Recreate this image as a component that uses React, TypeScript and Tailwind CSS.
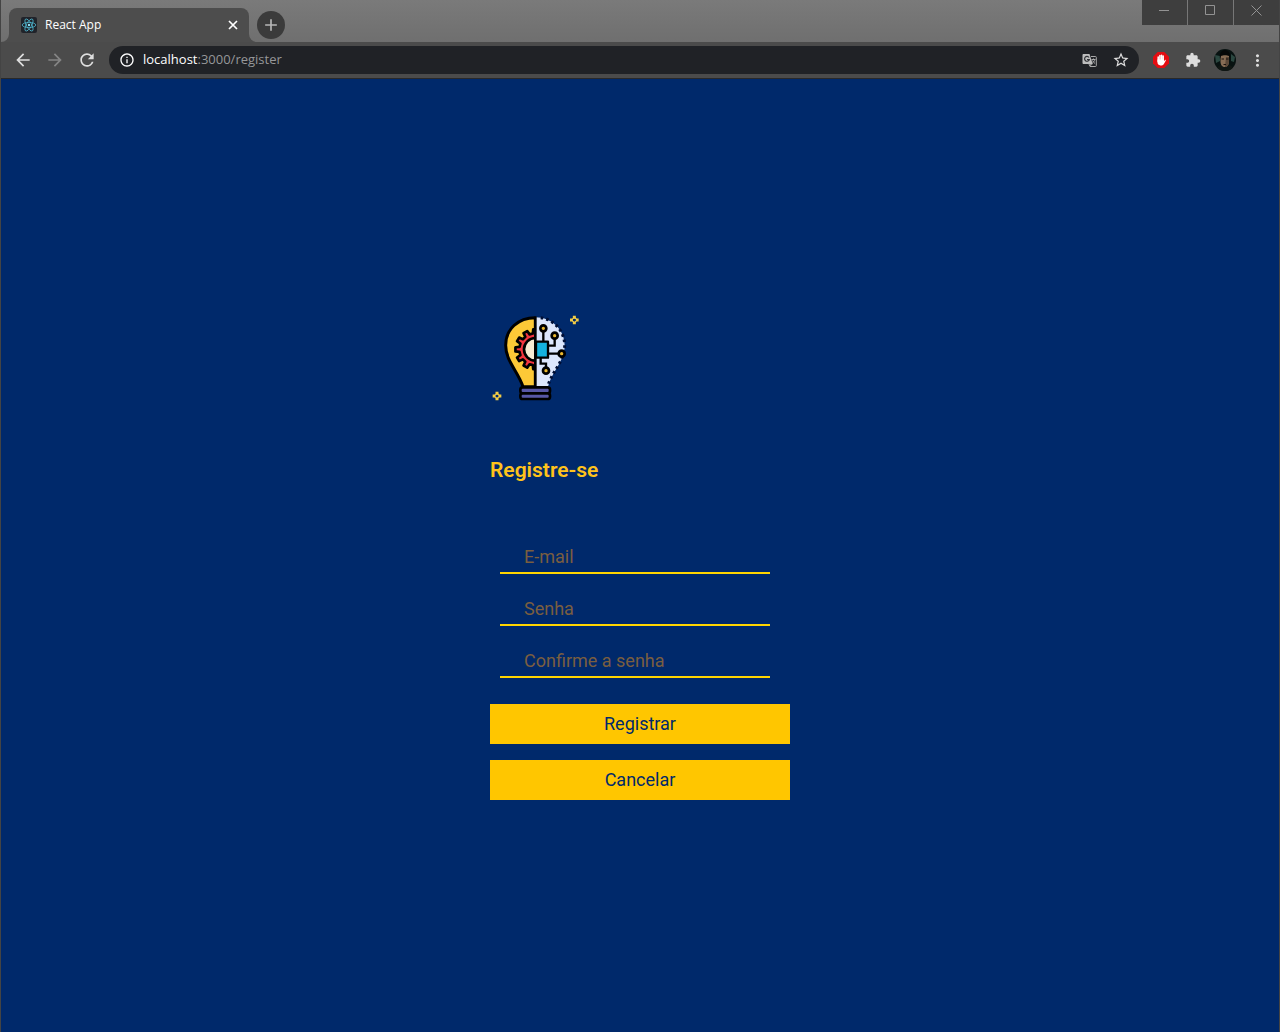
import type { ReactNode } from "react";
import {
  MdAdd,
  MdArrowBack,
  MdArrowForward,
  MdExtension,
  MdInfoOutline,
  MdMoreVert,
  MdRefresh,
  MdStarBorder,
} from "react-icons/md";

function gearPath(cx: number, cy: number, outer: number, inner: number, teeth: number) {
  const points: string[] = [];
  const step = (Math.PI * 2) / teeth;
  for (let i = 0; i < teeth; i++) {
    const a = i * step;
    const corners: [number, number][] = [
      [-0.3, inner],
      [-0.2, outer],
      [0.2, outer],
      [0.3, inner],
    ];
    for (const [offset, r] of corners) {
      const t = a + offset * step;
      points.push(`${(cx + r * Math.cos(t)).toFixed(1)} ${(cy + r * Math.sin(t)).toFixed(1)}`);
    }
  }
  return `M${points.join("L")}Z`;
}

function Sparkle({ x, y }: { x: number; y: number }) {
  return (
    <g fill="none" stroke="#f3cd45">
      <path d={`M${x} ${y - 13}v8M${x} ${y + 5}v8M${x - 13} ${y}h8M${x + 5} ${y}h8`} strokeWidth="9" />
      <path d={`M${x} ${y - 8}L${x + 8} ${y}L${x} ${y + 8}L${x - 8} ${y}Z`} strokeWidth="4" />
      <circle cx={x} cy={y} r="4" fill="#00296b" stroke="none" />
    </g>
  );
}

function BulbLogo() {
  return (
    <svg className="h-24 w-[90px]" viewBox="18 21 270 288" role="img" aria-label="Logo">
      <defs>
        <clipPath id="leftHalf">
          <path d="M50 20H154V250H50Z" />
        </clipPath>
      </defs>
      <path
        d="M154 38C102 38 65 73 65 121C65 168 101 197 117 245H154Z"
        fill="#fdc937"
        stroke="#000"
        strokeWidth="9"
        strokeLinejoin="round"
      />
      <path d="M154 37C204 37 242 75 242 121C242 168 206 197 192 245H154Z" fill="#dce6fc" />
      <path
        d="M170 38C210 43 242 79 242 121C242 168 206 197 192 241"
        fill="none"
        stroke="#000f35"
        strokeWidth="9"
        strokeDasharray="8 9"
      />
      <g clipPath="url(#leftHalf)">
        <path
          d={gearPath(154, 133, 60, 48, 12)}
          fill="#f4343f"
          stroke="#000"
          strokeWidth="8"
          strokeLinejoin="round"
        />
        <circle cx="154" cy="133" r="34" fill="#f7ead3" stroke="#000" strokeWidth="8" />
      </g>
      <path d="M154 35V246" stroke="#000" strokeWidth="8" />
      <g fill="none" stroke="#000" strokeWidth="8">
        <path d="M178 78V108M193 122H212V100M193 146H224M170 158V176H186V190" strokeWidth="7" />
        <g fill="#e9b72e">
          <circle cx="178" cy="70" r="9" />
          <circle cx="212" cy="92" r="9" />
          <circle cx="233" cy="146" r="9" />
          <circle cx="186" cy="197" r="9" />
        </g>
        <path d="M156 110H192V158H156Z" fill="#14b1dd" strokeLinejoin="round" strokeWidth="7" />
        <rect x="109" y="247" width="89" height="18" rx="7" fill="#5757a6" />
        <rect x="109" y="265" width="89" height="17" rx="7" fill="#5757a6" />
      </g>
      <Sparkle x={271} y={45} />
      <Sparkle x={39} y={273} />
    </svg>
  );
}

function ReactFavicon() {
  return (
    <svg className="size-4 rounded-xs bg-[#20232a]" viewBox="0 0 16 16" fill="none" stroke="#4fb4cc" aria-hidden="true">
      <g strokeWidth="0.8">
        <ellipse cx="8" cy="8" rx="6.8" ry="2.6" />
        <ellipse cx="8" cy="8" rx="6.8" ry="2.6" transform="rotate(60 8 8)" />
        <ellipse cx="8" cy="8" rx="6.8" ry="2.6" transform="rotate(120 8 8)" />
      </g>
      <circle cx="8" cy="8" r="1.2" fill="#8be0f5" stroke="none" />
    </svg>
  );
}

function TranslateIcon() {
  return (
    <svg className="size-[15px]" viewBox="0 0 15 15" fill="none" aria-hidden="true">
      <path d="M1.500 1h6l3.200 10H1.500C1 11 .5 10.500.5 10V2c0-.5.5-1 1-1Z" fill="#bdbdbd" />
      <path d="M9 3.500h4.500c.5 0 .8.300.8.800v8.400c0 .5-.3.800-.8.800H8L7 11" stroke="#aaaaaa" />
      <path d="M8 11h2.700L8 13.500Z" fill="#8d8d8d" />
      <path d="M7 4.500A2.400 2.400 0 1 0 7.300 6.500H5" stroke="#303236" strokeWidth="1.200" />
      <path d="M9.500 6.500H13.500M11.500 5.500v1M12.700 6.500c-.4 1.800-1.400 3-2.400 3.800M10.500 7.500c.6 1.200 1.500 2.200 2.500 3" stroke="#aaaaaa" />
    </svg>
  );
}

function BlockerIcon() {
  return (
    <svg className="size-4" viewBox="0 0 16 16" aria-hidden="true">
      <path d="M4.700 0h6.600L16 4.700v6.600L11.300 16H4.700L0 11.300V4.700Z" fill="#e40d12" />
      <path
        d="M5.200 5v4.500M6.900 3.600v5M8.600 3.200v5M10.200 4v5"
        stroke="#fff"
        strokeWidth="1.500"
        strokeLinecap="round"
      />
      <path
        d="M4.450 7.500h6.500v1.700l1-1.200c.6-.4 1.100 0 .8.700l-2 3.600c-.4.700-1 1.100-1.900 1.100H7.400c-1.800 0-2.950-1.300-2.950-3.100Z"
        fill="#fff"
      />
    </svg>
  );
}

function Avatar() {
  return (
    <svg className="size-[22px] rounded-full" viewBox="0 0 22 22" aria-hidden="true">
      <rect width="22" height="22" fill="#081211" />
      <path d="M1 6l5 1v5l-4 2ZM17 5l4 3-1 5-3-1Z" fill="#2b4740" />
      <path d="M2 22c1-5 4-7 9-7s8 2 9 7Z" fill="#101613" />
      <path d="M6.500 7c0-3 8.500-3 8.500 0v6c0 3-2 5-4.200 5s-4.300-2-4.300-5Z" fill="#866c54" />
      <path d="M12 8h3v5c0 3-2 5-4 5Z" fill="#5b4838" />
      <path d="M6 10c-1-6 2-9 5-9s6 3 5 9l-1-3c-2-1-6-1-8 0Z" fill="#050808" />
      <path d="M7.500 10h2.500M12 10h2.500M9.500 15.500h2.500" stroke="#1b130f" />
    </svg>
  );
}

function IconButton({ label, children }: { label: string; children: ReactNode }) {
  return (
    <button type="button" aria-label={label} className="flex size-8 items-center justify-center">
      {children}
    </button>
  );
}

function TabFoot({ side }: { side: "left" | "right" }) {
  return (
    <svg
      className={side === "left" ? "absolute bottom-0 -left-2 size-2" : "absolute bottom-0 -right-2 size-2"}
      viewBox="0 0 8 8"
      fill="#4d4d4d"
      aria-hidden="true"
    >
      <path d={side === "left" ? "M8 0V8H0A8 8 0 0 0 8 0Z" : "M0 0V8H8A8 8 0 0 1 0 0Z"} />
    </svg>
  );
}

function TitleBar() {
  return (
    <div className="flex h-[42px] bg-linear-to-b from-[#7a7a7a] to-[#6f6f6f] pl-2">
      <div className="relative mt-2 flex w-60 items-center rounded-t-lg bg-[#4d4d4d] pr-2 pl-3">
        <TabFoot side="left" />
        <ReactFavicon />
        <span className="ml-2 flex-1 text-xs text-white">React App</span>
        <button type="button" aria-label="Close tab" className="flex size-4 items-center justify-center text-white">
          <svg className="size-2.5" viewBox="0 0 10 10" stroke="currentColor" strokeWidth="1.700" aria-hidden="true">
            <path d="M1 1l8 8M9 1l-8 8" />
          </svg>
        </button>
        <TabFoot side="right" />
      </div>
      <button
        type="button"
        aria-label="New tab"
        className="mt-[11px] ml-2 flex size-7 items-center justify-center rounded-full bg-[#3b3b3b] text-[#b8b8b8]"
      >
        <MdAdd size={20} />
      </button>
      <div className="ml-auto flex h-[25px] gap-px text-[#939393]">
        <button type="button" aria-label="Minimize" className="flex w-[45px] justify-center bg-[#3e3e3e] pt-[5px]">
          <svg className="size-[11px]" viewBox="0 0 11 11" stroke="currentColor" aria-hidden="true">
            <path d="M0 5.500h10" />
          </svg>
        </button>
        <button type="button" aria-label="Maximize" className="flex w-[45px] justify-center bg-[#3e3e3e] pt-[5px]">
          <svg className="size-[11px]" viewBox="0 0 11 11" stroke="currentColor" fill="none" aria-hidden="true">
            <path d="M.5.5h9v9h-9Z" />
          </svg>
        </button>
        <button type="button" aria-label="Close" className="flex w-[45px] justify-center bg-[#3e3e3e] pt-[5px]">
          <svg className="size-[11px]" viewBox="0 0 11 11" stroke="currentColor" aria-hidden="true">
            <path d="M.5.5l10 10M10.500.5l-10 10" />
          </svg>
        </button>
      </div>
    </div>
  );
}

function AddressBar() {
  return (
    <div className="flex h-[37px] items-center border-b border-[#292929] bg-[#4b4b4b] px-1.5 text-[#dedede]">
      <IconButton label="Back">
        <MdArrowBack size={20} />
      </IconButton>
      <IconButton label="Forward">
        <MdArrowForward size={20} className="text-[#858585]" />
      </IconButton>
      <IconButton label="Reload">
        <MdRefresh size={20} />
      </IconButton>
      <div className="ml-1.5 flex h-7 flex-1 items-center rounded-full bg-[#202226] pr-0.5 pl-2.5">
        <MdInfoOutline size={16} className="text-white" />
        <span className="ml-2 flex-1 text-[13px] text-[#969799]">
          <span className="text-white">localhost</span>:3000/register
        </span>
        <IconButton label="Translate">
          <TranslateIcon />
        </IconButton>
        <IconButton label="Bookmark">
          <MdStarBorder size={18} />
        </IconButton>
      </div>
      <div className="ml-1.5 flex items-center">
        <IconButton label="Ad blocker">
          <BlockerIcon />
        </IconButton>
        <IconButton label="Extensions">
          <MdExtension size={16} />
        </IconButton>
        <IconButton label="Profile">
          <Avatar />
        </IconButton>
        <IconButton label="Menu">
          <MdMoreVert size={19} />
        </IconButton>
      </div>
    </div>
  );
}

function Field({ label, type }: { label: string; type: string }) {
  return (
    <input
      type={type}
      aria-label={label}
      placeholder={label}
      className="mx-2.5 h-9 w-[270px] border-b-2 border-[#ffd500] bg-transparent px-6 pt-1 text-lg text-[#ffc600] outline-none placeholder:text-[#7a5e40]"
    />
  );
}

export default function App() {
  return (
    <div className="flex min-h-screen flex-col border-x border-[#444444] bg-[#00296b] font-['Open_Sans',sans-serif]">
      <header>
        <TitleBar />
        <AddressBar />
      </header>
      <main className="flex flex-1 flex-col items-center justify-center font-[Roboto,sans-serif]">
        <form className="flex w-[300px] flex-col">
          <BulbLogo />
          <h1 className="mt-12 text-[21px] leading-7 font-semibold text-[#ffc31b]">Registre-se</h1>
          <div className="mt-[54px] flex flex-col gap-4">
            <Field label="E-mail" type="email" />
            <Field label="Senha" type="password" />
            <Field label="Confirme a senha" type="password" />
          </div>
          <div className="mt-[26px] flex flex-col gap-4">
            <button type="submit" className="h-10 bg-[#ffc600] text-lg text-[#00296b]">
              Registrar
            </button>
            <button type="button" className="h-10 bg-[#ffc600] text-lg text-[#00296b]">
              Cancelar
            </button>
          </div>
        </form>
      </main>
    </div>
  );
}
